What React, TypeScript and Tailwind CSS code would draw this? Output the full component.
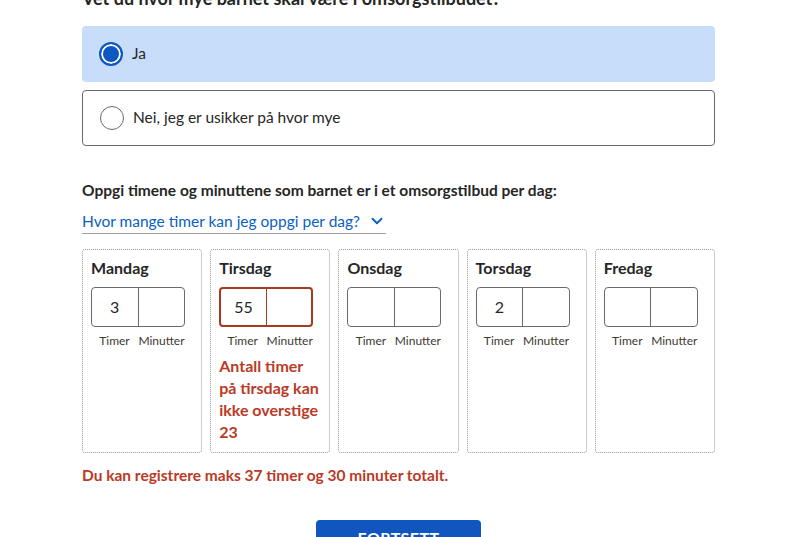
import { ChevronDown } from "lucide-react";

const days = [
  { name: "Mandag", timer: "3", error: false },
  { name: "Tirsdag", timer: "55", error: true },
  { name: "Onsdag", timer: "", error: false },
  { name: "Torsdag", timer: "2", error: false },
  { name: "Fredag", timer: "", error: false },
];

const DayCard = ({ name, timer, error }: { name: string; timer: string; error: boolean }) => (
  <div className="border border-dotted border-[#9a9a9a] rounded-[3px] px-2 pt-[7px] pb-[9px]">
    <div className="font-bold text-[16px] leading-[22px] text-[#262626]">{name}</div>
    <div
      className={`mt-2 flex w-[94px] h-[40px] rounded-[4px] overflow-hidden ${
        error ? "border-2 border-[#a53b21]" : "border border-[#6a6a6a]"
      }`}
    >
      <div
        className={`flex-1 flex items-center justify-center text-[16px] text-[#262626] ${
          error ? "border-r border-[#a53b21]" : "border-r border-[#6a6a6a]"
        }`}
      >
        {timer}
      </div>
      <div className="flex-1" />
    </div>
    <div className="mt-[7px] flex w-[94px] text-[12px] leading-[14px] text-[#3e3832]">
      <span className="flex-1 text-center">Timer</span>
      <span className="flex-1 text-center">Minutter</span>
    </div>
    {error && (
      <p className="mt-[7px] font-bold text-[16px] leading-[22px] text-[#ba3a26]">
        Antall timer på tirsdag kan ikke overstige 23
      </p>
    )}
  </div>
);

export default function App() {
  return (
    <div
      className="w-[811px] h-[537px] overflow-hidden bg-white text-[#262626]"
      style={{ fontFamily: "Lato, 'Liberation Sans', sans-serif" }}
    >
      <div className="ml-[82px] w-[633px]">
        {/* Question heading, cut off by the top edge */}
        <h2 className="-mt-[14px] font-bold text-[18px] leading-[24px]">
          Vet du hvor mye barnet skal være i omsorgstilbudet?
        </h2>

        <div className="mt-[16px] flex flex-col gap-2">
          <label className="h-[56px] flex items-center gap-[9px] pl-[17px] rounded-[4px] bg-[#c7ddfa]">
            <span className="w-6 h-6 rounded-full border-2 border-[#0c57c2] bg-[#0c57c2] shadow-[inset_0_0_0_2px_white]" />
            <span className="text-[15.5px]">Ja</span>
          </label>
          <label className="h-[56px] flex items-center gap-[9px] pl-[17px] rounded-[4px] border border-[#6a6a6a]">
            <span className="w-6 h-6 rounded-full border border-[#6a6a6a] bg-white" />
            <span className="text-[15.5px]">Nei, jeg er usikker på hvor mye</span>
          </label>
        </div>

        <p className="mt-[32px] font-bold text-[15.5px] leading-[24px]">
          Oppgi timene og minuttene som barnet er i et omsorgstilbud per dag:
        </p>
        <button className="mt-[8px] flex items-center gap-[8px] pb-[1px] border-b border-[#a0a0a0] text-[15.5px] leading-[22px] text-[#0b5fc1]">
          Hvor mange timer kan jeg oppgi per dag?
          <ChevronDown size={18} strokeWidth={2.5} />
        </button>

        <div className="mt-[15px] grid grid-cols-5 gap-2">
          {days.map((d) => (
            <DayCard key={d.name} {...d} />
          ))}
        </div>

        <p className="mt-[11px] font-bold text-[15.5px] leading-[22px] text-[#ba3a26]">
          Du kan registrere maks 37 timer og 30 minuter totalt.
        </p>

        <div className="mt-[34px] flex justify-center">
          <button className="w-[165px] h-[40px] rounded-[4px] bg-[#1155bf] text-white font-bold text-[16px] leading-[22px] tracking-wide flex items-start justify-center pt-[7px]">
            FORTSETT
          </button>
        </div>
      </div>
    </div>
  );
}
